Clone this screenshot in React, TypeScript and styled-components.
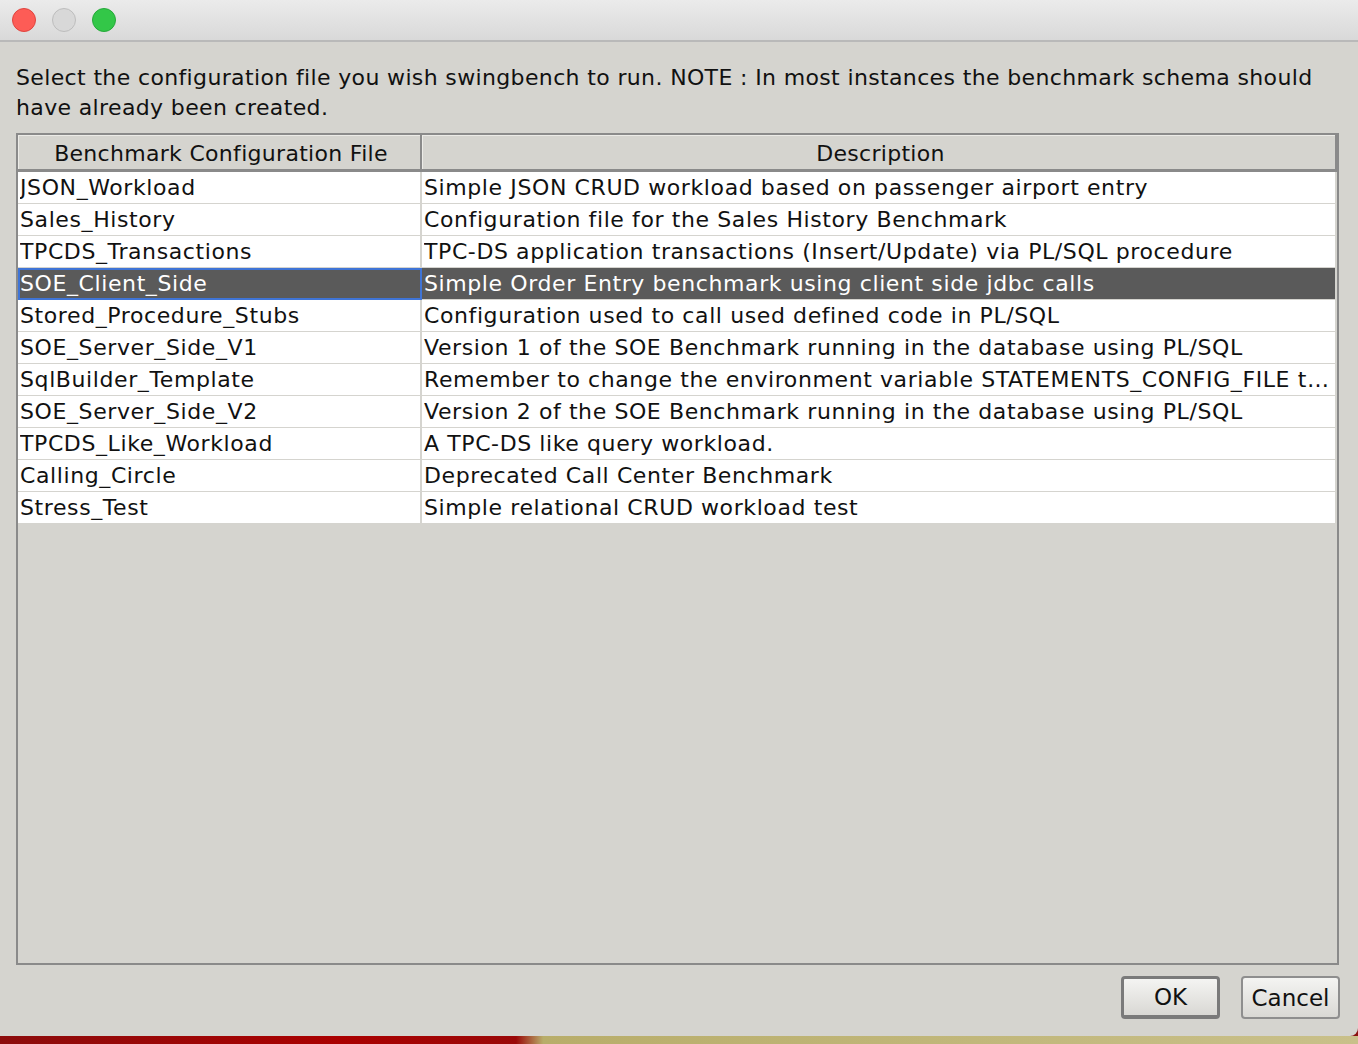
import React from "react";
import styled, { createGlobalStyle } from "styled-components";

const Global = createGlobalStyle`
  html, body { margin: 0; padding: 0; background: #8a1010; }
  body { font-family: "DejaVu Sans", "Liberation Sans", sans-serif; }
  * { box-sizing: border-box; }
`;

const Window = styled.div`
  width: 1358px;
  height: 1036px;
  display: flex;
  flex-direction: column;
  background: #d5d4cf;
  border-bottom-right-radius: 8px;
  overflow: hidden;
`;

const TitleBar = styled.div`
  height: 42px;
  flex: none;
  display: flex;
  align-items: center;
  gap: 16px;
  padding: 0 0 0 12px;
  background: linear-gradient(#ebebeb, #d9d9d9);
  border-bottom: 2px solid #b9b9b9;
`;

const Light = styled.div<{ $c: string; $b: string }>`
  width: 24px;
  height: 24px;
  border-radius: 50%;
  background: ${(p) => p.$c};
  border: 1px solid ${(p) => p.$b};
`;

const Body = styled.div`
  flex: 1;
  display: flex;
  flex-direction: column;
  padding: 21px 19px 18px 16px;
`;

const Intro = styled.p`
  margin: 0 0 10px 0;
  font-size: 22px;
  line-height: 30px;
  color: #111;
  letter-spacing: 0.36px;
`;

const TableBox = styled.div`
  height: 832px;
  border: 2px solid #8a8a8a;
  display: flex;
  flex-direction: column;
  background: #d5d4cf;
`;

const Grid = styled.div`
  display: grid;
  grid-template-columns: 404px 1fr;
`;

const HeadCell = styled.div`
  height: 37px;
  display: flex;
  align-items: center;
  justify-content: center;
  font-size: 22px;
  letter-spacing: 0.3px;
  color: #111;
  background: #d5d4cf;
  border-bottom: 3px solid #8a8a8a;
  border-right: 2px solid #8a8a8a;
  box-shadow: inset 1px 1px 0 #ecebe7;
  padding: 2px 0 0 4px;
`;

const Cell = styled.div<{ $sel?: boolean; $focus?: boolean }>`
  height: 32px;
  display: flex;
  align-items: center;
  padding: 0 1px 1px 2px;
  font-size: 22px;
  letter-spacing: 0.6px;
  min-width: 0;
  color: ${(p) => (p.$sel ? "#ffffff" : "#111")};
  background: ${(p) => (p.$sel ? "#5a5a5a" : "#ffffff")};
  border-bottom: 1px solid #d5d4cf;
  border-right: 2px solid #d5d4cf;
  outline: ${(p) => (p.$focus ? "2px solid #3f74d6" : "none")};
  outline-offset: -2px;
`;

const CellText = styled.span`
  display: block;
  min-width: 0;
  white-space: nowrap;
  overflow: hidden;
  text-overflow: ellipsis;
`;

const Footer = styled.div`
  margin-top: 11px;
  display: flex;
  justify-content: flex-end;
  gap: 21px;
  margin-right: -1px;
`;

const Button = styled.button<{ $default?: boolean }>`
  height: 43px;
  width: 99px;
  font-family: inherit;
  font-size: 23px;
  color: #111;
  background: linear-gradient(#f4f4f2, #d9d8d4);
  border: ${(p) => (p.$default ? "3px solid #7a7a7a" : "2px solid #8e8e8e")};
  border-bottom-width: ${(p) => (p.$default ? "4px" : "2px")};
  border-radius: 4px;
  padding: 0;
  display: flex;
  align-items: center;
  justify-content: center;
`;

const Desktop = styled.div`
  height: 8px;
  background: linear-gradient(90deg, #8c0c0c 0%, #a00 25%, #9a0808 38%, #b8ad6a 40%, #c9c08a 100%);
`;

const rows: [string, string][] = [
  ["JSON_Workload", "Simple JSON CRUD workload based on passenger airport entry"],
  ["Sales_History", "Configuration file for the Sales History Benchmark"],
  ["TPCDS_Transactions", "TPC-DS application transactions (Insert/Update) via PL/SQL procedure"],
  ["SOE_Client_Side", "Simple Order Entry benchmark using client side jdbc calls"],
  ["Stored_Procedure_Stubs", "Configuration used to call used defined code in PL/SQL"],
  ["SOE_Server_Side_V1", "Version 1 of the SOE Benchmark running in the database using PL/SQL"],
  ["SqlBuilder_Template", "Remember to change the environment variable STATEMENTS_CONFIG_FILE to point to your file"],
  ["SOE_Server_Side_V2", "Version 2 of the SOE Benchmark running in the database using PL/SQL"],
  ["TPCDS_Like_Workload", "A TPC-DS like query workload."],
  ["Calling_Circle", "Deprecated Call Center Benchmark"],
  ["Stress_Test", "Simple relational CRUD workload test"],
];

export default function App() {
  return (
    <>
      <Global />
      <Window>
        <TitleBar>
          <Light $c="#fd5c56" $b="#e0443e" />
          <Light $c="#d8d8d8" $b="#bdbdbd" />
          <Light $c="#33c748" $b="#26a93a" />
        </TitleBar>
        <Body>
          <Intro>
            Select the configuration file you wish swingbench to run. NOTE : In most instances the benchmark schema should
            have already been created.
          </Intro>
          <TableBox>
            <Grid>
              <HeadCell>Benchmark Configuration File</HeadCell>
              <HeadCell>Description</HeadCell>
              {rows.map(([a, b], i) => (
                <React.Fragment key={a}>
                  <Cell $sel={i === 3} $focus={i === 3}>
                    <CellText>{a}</CellText>
                  </Cell>
                  <Cell $sel={i === 3}>
                    <CellText>{b}</CellText>
                  </Cell>
                </React.Fragment>
              ))}
            </Grid>
          </TableBox>
          <Footer>
            <Button $default>OK</Button>
            <Button>Cancel</Button>
          </Footer>
        </Body>
      </Window>
      <Desktop />
    </>
  );
}
